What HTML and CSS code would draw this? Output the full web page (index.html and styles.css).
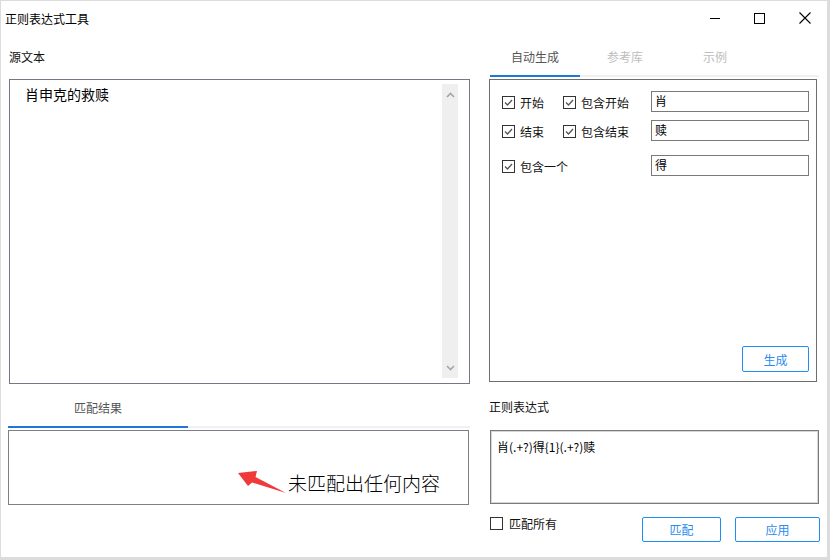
FILE: index.html
```html
<!DOCTYPE html>
<html lang="zh-CN">
<head>
    <meta charset="UTF-8">
    <title>正则表达式工具</title>
    <link rel="stylesheet" href="styles.css">
</head>
<body>

    <div class="window">
        <div class="titlebar">
            <span class="title">正则表达式工具</span>
            <div class="controls">
                <span class="ctrl"><svg width="10" height="10" viewBox="0 0 10 10"><path d="M0 5.5H10" stroke="#000" stroke-width="1"/></svg></span>
                <span class="ctrl"><svg width="11" height="11" viewBox="0 0 11 11"><rect x="0.5" y="0.5" width="10" height="10" fill="none" stroke="#000"/></svg></span>
                <span class="ctrl"><svg width="12" height="12" viewBox="0 0 12 12"><path d="M0.5 0.5L11.5 11.5M11.5 0.5L0.5 11.5" stroke="#000" stroke-width="1.1"/></svg></span>
            </div>
        </div>

        <div class="main">
            <!-- left column: source text + match result -->
            <div class="left">
                <div class="label">源文本</div>
                <div class="source-box">
                    <div class="source-text">肖申克的救赎</div>
                    <div class="scrollbar">
                        <svg width="9" height="6" viewBox="0 0 9 6"><path d="M1 5L4.5 1.5L8 5" fill="none" stroke="#a6a6a6" stroke-width="1.6"/></svg>
                        <svg width="9" height="6" viewBox="0 0 9 6"><path d="M1 1L4.5 4.5L8 1" fill="none" stroke="#a6a6a6" stroke-width="1.6"/></svg>
                    </div>
                </div>
                <div class="tabs tabs-result">
                    <div class="tab active">匹配结果</div>
                </div>
                <div class="result-box">
                    <svg class="arrow" width="52" height="28" viewBox="0 0 52 28">
                        <polygon points="2,5 21,3 19.5,9 50,25 16,14.5 12,18" fill="#f03a3a"/>
                    </svg>
                    <span class="no-match">未匹配出任何内容</span>
                </div>
            </div>

            <!-- right column: generator + regex -->
            <div class="right">
                <div class="tabs tabs-gen">
                    <div class="tab active">自动生成</div>
                    <div class="tab">参考库</div>
                    <div class="tab">示例</div>
                </div>
                <div class="gen-panel">
                    <div class="gen-row">
                        <label class="check c1"><svg width="13" height="13" viewBox="0 0 13 13"><rect x="0.5" y="0.5" width="12" height="12" fill="#fff" stroke="#333"/><path d="M3 6.5L5.5 9L10 4" fill="none" stroke="#555" stroke-width="1.3"/></svg>开始</label>
                        <label class="check c2"><svg width="13" height="13" viewBox="0 0 13 13"><rect x="0.5" y="0.5" width="12" height="12" fill="#fff" stroke="#333"/><path d="M3 6.5L5.5 9L10 4" fill="none" stroke="#555" stroke-width="1.3"/></svg>包含开始</label>
                        <div class="field">肖</div>
                    </div>
                    <div class="gen-row">
                        <label class="check c1"><svg width="13" height="13" viewBox="0 0 13 13"><rect x="0.5" y="0.5" width="12" height="12" fill="#fff" stroke="#333"/><path d="M3 6.5L5.5 9L10 4" fill="none" stroke="#555" stroke-width="1.3"/></svg>结束</label>
                        <label class="check c2"><svg width="13" height="13" viewBox="0 0 13 13"><rect x="0.5" y="0.5" width="12" height="12" fill="#fff" stroke="#333"/><path d="M3 6.5L5.5 9L10 4" fill="none" stroke="#555" stroke-width="1.3"/></svg>包含结束</label>
                        <div class="field">赎</div>
                    </div>
                    <div class="gen-row spaced">
                        <label class="check c12"><svg width="13" height="13" viewBox="0 0 13 13"><rect x="0.5" y="0.5" width="12" height="12" fill="#fff" stroke="#333"/><path d="M3 6.5L5.5 9L10 4" fill="none" stroke="#555" stroke-width="1.3"/></svg>包含一个</label>
                        <div class="field">得</div>
                    </div>
                    <div class="gen-footer">
                        <button class="btn btn-gen">生成</button>
                    </div>
                </div>

                <div class="label label-regex">正则表达式</div>
                <div class="regex-box">肖(.+?)得{1}(.+?)赎</div>

                <div class="actions">
                    <label class="check check-all"><svg width="13" height="13" viewBox="0 0 13 13"><rect x="0.5" y="0.5" width="12" height="12" fill="#fff" stroke="#333"/></svg>匹配所有</label>
                    <button class="btn btn-match">匹配</button>
                    <button class="btn btn-apply">应用</button>
                </div>
            </div>
        </div>
    </div>

</body>
</html>
```

FILE: styles.css
```css
* {
    margin: 0;
    padding: 0;
    box-sizing: border-box;
}

body {
    font-family: "Microsoft YaHei", "Noto Sans CJK SC", sans-serif;
    font-size: 12px;
    color: #1a1a1a;
    background: #dcdcdc;
    width: 830px;
    height: 560px;
    overflow: hidden;
}

.window {
    margin: 1px 0 0 1px;
    width: 826px;
    height: 556px;
    background: #fff;
}

.titlebar {
    display: flex;
    align-items: center;
    height: 34px;
    padding-left: 4px;
}

.title {
    color: #000;
    flex: 1;
}

.controls {
    display: flex;
}

.ctrl {
    width: 45px;
    height: 34px;
    display: flex;
    align-items: center;
    justify-content: center;
}

.main {
    display: flex;
    padding-left: 8px;
}

.left {
    width: 461px;
}

.right {
    width: 331px;
    margin-left: 19px;
}

.label {
    height: 44px;
    line-height: 44px;
    color: #111;
}

.source-box {
    display: flex;
    height: 305px;
    border: 1px solid #767686;
}

.source-text {
    flex: 1;
    padding: 4px 15px;
    font-size: 14px;
    line-height: 20px;
    color: #000;
}

.scrollbar {
    width: 16px;
    margin: 4px 11px 5px 0;
    background: #efefef;
    display: flex;
    flex-direction: column;
    justify-content: space-between;
    align-items: center;
    padding: 8px 0 7px;
}

.tabs {
    display: flex;
    align-items: flex-end;
    border-bottom: 2px solid #eff0f3;
}

.tab {
    text-align: center;
    color: #bdbdbd;
    border-bottom: 2px solid transparent;
    margin-bottom: -2px;
}

.tab.active {
    color: #555;
    border-bottom-color: #1f78d3;
}

.tabs-result {
    margin-left: -1px;
}

.tabs-result .tab {
    width: 180px;
    height: 44px;
    padding-top: 6px;
    line-height: 36px;
}

.tabs-gen {
    margin-left: 1px;
    margin-right: 1px;
}

.tabs-gen .tab {
    width: 90px;
    height: 42px;
    padding-top: 4px;
    line-height: 36px;
}

.result-box {
    display: flex;
    align-items: flex-start;
    margin: 2px 0 0 -1px;
    width: 461px;
    height: 75px;
    border: 1px solid #7d7f88;
    padding: 37px 0 0 227px;
}

.arrow {
    flex-shrink: 0;
}

.no-match {
    font-size: 19px;
    font-weight: 300;
    line-height: 24px;
    margin-top: 3px;
    color: #000;
    white-space: nowrap;
}

.gen-panel {
    display: flex;
    flex-direction: column;
    width: 328px;
    height: 303px;
    margin-top: 2px;
    border: 1px solid #6e6e6e;
    padding: 11px 0 0 12px;
}

.gen-row {
    display: flex;
    align-items: center;
    height: 21px;
    margin-bottom: 8px;
}

.gen-row.spaced {
    margin-top: 6px;
}

.check {
    display: flex;
    align-items: center;
    gap: 5px;
    padding-top: 2px;
    color: #111;
    white-space: nowrap;
}

.c1 {
    width: 61px;
}

.c2 {
    width: 88px;
}

.c12 {
    width: 149px;
}

.field {
    width: 158px;
    height: 21px;
    border: 1px solid #7a7a7a;
    padding-left: 3px;
    line-height: 18px;
    color: #000;
}

.gen-footer {
    margin-top: auto;
    display: flex;
    justify-content: flex-end;
    padding: 0 7px 9px 0;
}

.btn {
    font-family: inherit;
    font-size: 12px;
    background: #fff;
    color: #2a8cf0;
    border: 1px solid #1e8ef5;
    border-radius: 2px;
    cursor: pointer;
}

.btn-gen {
    width: 67px;
    height: 26px;
}

.label-regex {
    height: 48px;
    padding-top: 2px;
    line-height: 46px;
}

.regex-box {
    margin-left: 1px;
    width: 329px;
    height: 74px;
    border: 1px solid #7a7a7a;
    box-shadow: inset 0 0 0 1px #d6d6d6;
    padding: 8px 6px;
    line-height: 16px;
    color: #000;
}

.actions {
    display: flex;
    margin-top: 13px;
    height: 25px;
}

.check-all {
    align-self: flex-start;
    margin-left: 1px;
    padding-top: 0;
    gap: 6px;
    line-height: 13px;
}

.btn-match {
    margin-left: auto;
    width: 79px;
    height: 25px;
}

.btn-apply {
    margin-left: 14px;
    width: 85px;
    height: 25px;
}
```
